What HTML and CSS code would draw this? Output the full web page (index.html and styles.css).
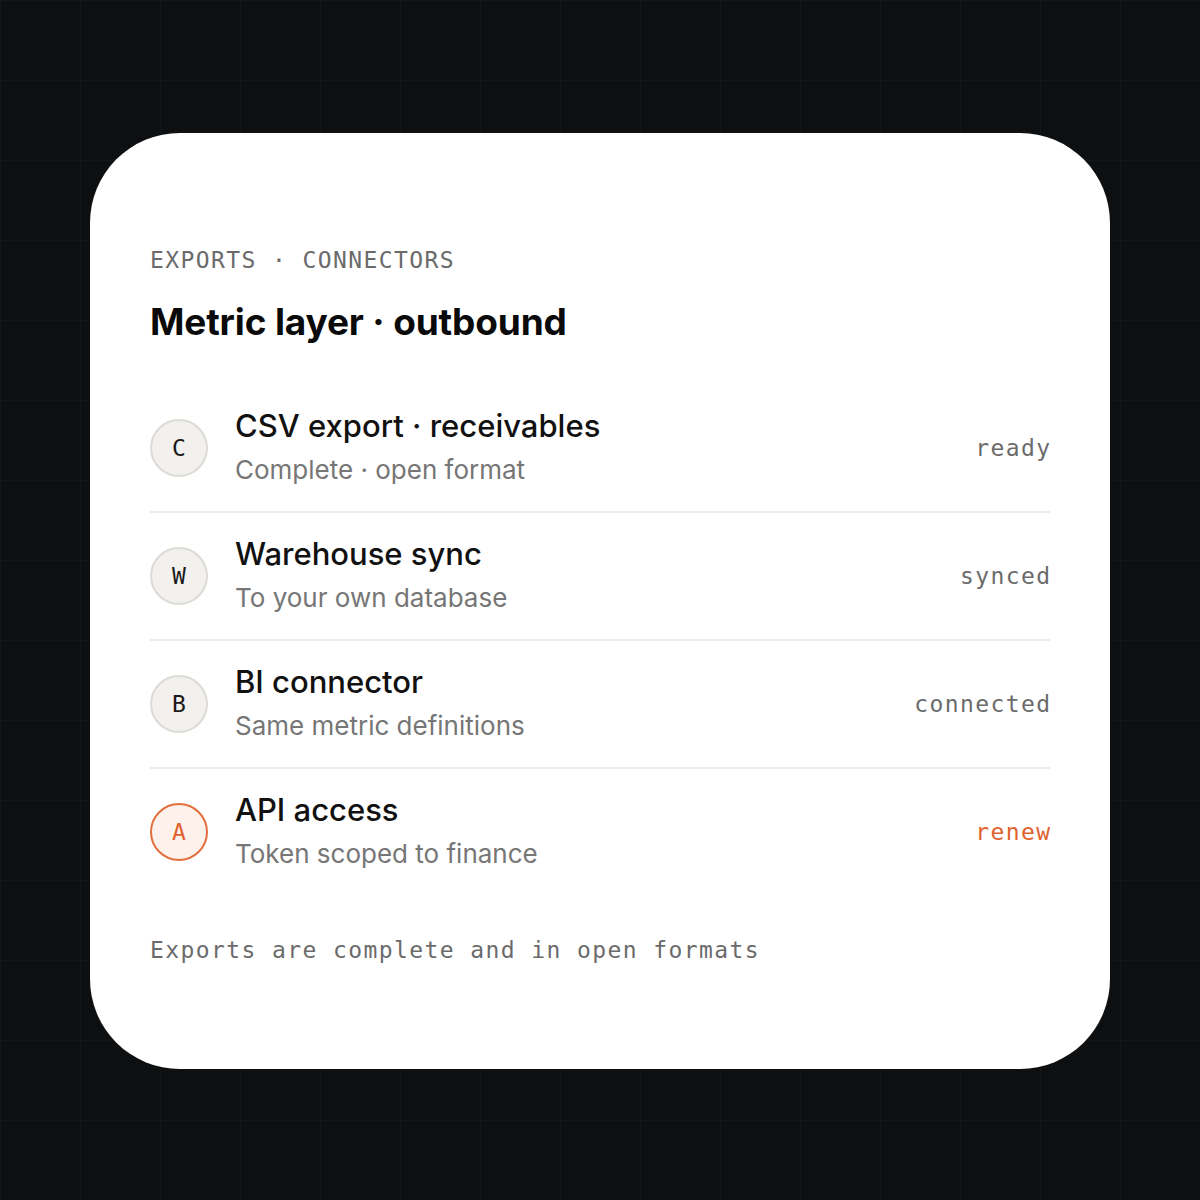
FILE: index.html
```html
<!DOCTYPE html>
<html>
<head>
<meta charset="utf-8">
<link rel="stylesheet" href="styles.css">
</head>
<body>
<main class="stage">
  <section class="card">
    <div class="eyebrow">EXPORTS · CONNECTORS</div>
    <h1 class="title">Metric layer · outbound</h1>
    <ul class="list">
      <li class="row">
        <span class="avatar">C</span>
        <div class="text">
          <div class="name">CSV export · receivables</div>
          <div class="desc">Complete · open format</div>
        </div>
        <span class="status">ready</span>
      </li>
      <li class="row">
        <span class="avatar">W</span>
        <div class="text">
          <div class="name">Warehouse sync</div>
          <div class="desc">To your own database</div>
        </div>
        <span class="status">synced</span>
      </li>
      <li class="row">
        <span class="avatar">B</span>
        <div class="text">
          <div class="name">BI connector</div>
          <div class="desc">Same metric definitions</div>
        </div>
        <span class="status">connected</span>
      </li>
      <li class="row">
        <span class="avatar avatar-warn">A</span>
        <div class="text">
          <div class="name">API access</div>
          <div class="desc">Token scoped to finance</div>
        </div>
        <span class="status status-warn">renew</span>
      </li>
    </ul>
    <p class="footer">Exports are complete and in open formats</p>
  </section>
</main>
</body>
</html>
```
FILE: styles.css
```css
* { box-sizing: border-box; }
html, body { margin: 0; padding: 0; }
body {
  width: 1200px;
  height: 1200px;
  background-color: #0e0f11;
  background-image:
    linear-gradient(to right, rgba(255,255,255,0.025) 1px, transparent 1px),
    linear-gradient(to bottom, rgba(255,255,255,0.025) 1px, transparent 1px);
  background-size: 80px 80px;
  font-family: Inter, "Noto Sans", sans-serif;
}
.stage {
  height: 1200px;
  padding-top: 133px;
  display: flex;
  justify-content: center;
  align-items: flex-start;
}
.card {
  width: 1020px;
  background: #ffffff;
  border-radius: 90px;
  padding: 112px 60px 104px;
}
.eyebrow,
.status,
.footer,
.avatar {
  font-family: "DejaVu Sans Mono", monospace;
}
.eyebrow {
  font-size: 23px;
  line-height: 30px;
  letter-spacing: 1.4px;
  color: #6b6b6b;
}
.title {
  margin: 24px 0 0;
  font-size: 37px;
  line-height: 46px;
  font-weight: 700;
  color: #0a0a0a;
  letter-spacing: -0.15px;
}
.list {
  list-style: none;
  margin: 40px 0 0;
  padding: 0;
}
.row {
  display: flex;
  align-items: center;
  padding: 21px 0;
  border-bottom: 2px solid #ececec;
}
.row:last-child { border-bottom: none; }
.avatar {
  flex: none;
  width: 58px;
  height: 58px;
  border-radius: 50%;
  background: #f2f1ee;
  border: 2px solid #dcdbd8;
  display: flex;
  align-items: center;
  justify-content: center;
  font-size: 23px;
  color: #1a1a1a;
}
.avatar-warn {
  background: #fdf1eb;
  border-color: #e2703f;
  color: #e0622f;
}
.text {
  flex: 1;
  margin-left: 27px;
}
.name {
  font-size: 31px;
  line-height: 40px;
  font-weight: 500;
  color: #111;
}
.desc {
  margin-top: 4px;
  font-size: 26px;
  line-height: 40px;
  color: #767676;
}
.status {
  font-size: 23px;
  letter-spacing: 1.4px;
  margin-right: -1.4px;
  color: #6b6b6b;
}
.status-warn { color: #e0622f; }
.footer {
  margin: 40px 0 0;
  font-size: 23px;
  line-height: 30px;
  letter-spacing: 1.4px;
  color: #6b6b6b;
}
```
